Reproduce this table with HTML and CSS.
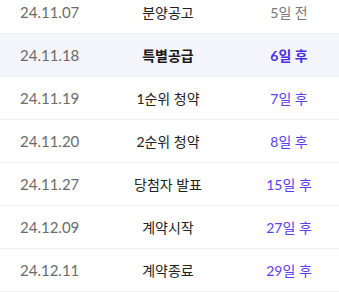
FILE: index.html
```html
<!DOCTYPE html>
<html lang="ko">
<head>
<meta charset="utf-8">
<link rel="stylesheet" href="styles.css">
</head>
<body>
<ul class="schedule">
  <li class="row"><span class="date">24.11.07</span><span class="event">분양공고</span><span class="dday past">5일 전</span></li>
  <li class="row current"><span class="date">24.11.18</span><span class="event">특별공급</span><span class="dday">6일 후</span></li>
  <li class="row"><span class="date">24.11.19</span><span class="event">1순위 청약</span><span class="dday">7일 후</span></li>
  <li class="row"><span class="date">24.11.20</span><span class="event">2순위 청약</span><span class="dday">8일 후</span></li>
  <li class="row"><span class="date">24.11.27</span><span class="event">당첨자 발표</span><span class="dday">15일 후</span></li>
  <li class="row"><span class="date">24.12.09</span><span class="event">계약시작</span><span class="dday">27일 후</span></li>
  <li class="row"><span class="date">24.12.11</span><span class="event">계약종료</span><span class="dday">29일 후</span></li>
</ul>
</body>
</html>
```
FILE: styles.css
```css
html, body {
  margin: 0;
  padding: 0;
  background: #fff;
}
body {
  font-family: Lato, "Noto Sans CJK KR", sans-serif;
  font-size: 14px;
  overflow: hidden;
}
.schedule {
  list-style: none;
  margin: -9px 0 0;
  padding: 0;
}
.row {
  display: grid;
  grid-template-columns: 67px 1fr 80px;
  align-items: center;
  height: 42px;
  padding: 0 10px 0 20px;
  border-bottom: 1px solid #efeff2;
}
.row.current {
  background: #f4f4fb;
}
.date {
  color: #6b6b6b;
  font-size: 15px;
}
.event {
  text-align: center;
  color: #222;
}
.dday {
  text-align: center;
  color: #5b3df0;
}
.dday.past {
  color: #777;
}
.current .event {
  font-weight: 700;
  color: #1a1a1a;
}
.current .dday {
  font-weight: 700;
  color: #4a2ee8;
}
```
